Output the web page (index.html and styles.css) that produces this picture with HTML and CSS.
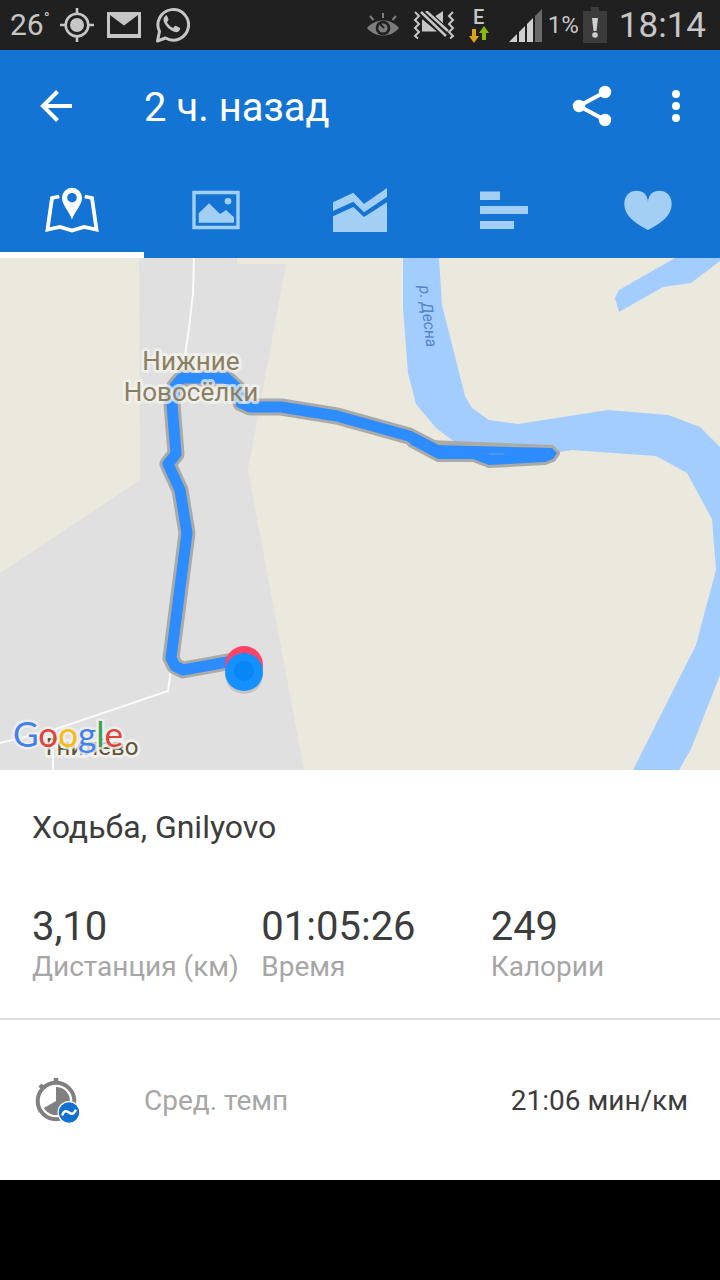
FILE: index.html
```
<!DOCTYPE html>
<html lang="ru">
<head>
  <meta charset="UTF-8">
  <meta name="viewport" content="width=device-width, initial-scale=1">
  <title>Ходьба, Gnilyovo</title>
  <link rel="stylesheet" href="styles.css">
</head>
<body>

  <div class="status-bar">
    <div class="status-left">
      <span class="temp">26<span class="degree">°</span></span>
      <svg class="status-icon" width="34" height="34" viewBox="0 0 34 34">
        <circle cx="17" cy="17" r="11.3" fill="none" stroke="#c6c6c6" stroke-width="2.6"/>
        <circle cx="17" cy="17" r="7" fill="#c6c6c6"/>
        <path d="M17 0v6M17 28v6M0 17h6M28 17h6" stroke="#c6c6c6" stroke-width="2.6"/>
      </svg>
      <svg class="status-icon" width="34" height="26" viewBox="0 0 34 26">
        <path d="M0 0h34v26H0z" fill="#c6c6c6"/>
        <path d="M3 3L17 13.500 31 3v19H3z" fill="#202020"/>
      </svg>
      <svg class="status-icon" width="36" height="36" viewBox="0 0 36 36">
        <path d="M3.500 34l2-9.500A15.300 15.300 0 1 1 11.500 31z" fill="none" stroke="#c6c6c6" stroke-width="3" stroke-linejoin="round"/>
        <path d="M11.500 9c-2 1-2.500 3.500-1.500 6 2 4.500 6 8.500 11 10 2.500.5 4.500-.5 5.200-3 .1-.7 0-1-.6-1.300l-3.700-1.900c-.6-.2-1 0-1.400.5l-1.300 1.600c-3-1.200-5-3.300-6.300-5.700l1.400-1.900c.3-.4.3-.7.1-1.200l-1.500-3.500c-.3-.6-.9-.6-1.900.4z" fill="#c6c6c6"/>
      </svg>
    </div>
    <div class="status-right">
      <svg class="icon-eye" width="32" height="26" viewBox="0 0 32 26">
        <path d="M0 16C8 6 24 6 32 16 24 26 8 26 0 16z" fill="#7d7d7d"/>
        <circle cx="16" cy="16" r="7.300" fill="#202020"/>
        <circle cx="16" cy="16" r="4.600" fill="#7d7d7d"/>
        <path d="M13 12l4 4" stroke="#202020" stroke-width="2"/>
        <path d="M16 1v5M3 4l3.500 4M29 4l-3.500 4" stroke="#7d7d7d" stroke-width="2"/>
      </svg>
      <svg class="icon-mute" width="42" height="28" viewBox="0 0 42 28">
        <path d="M2 1l4 4-4 4 4 4-4 4 4 4-4 4 3 2.500M40 1l-4 4 4 4-4 4 4 4-4 4 4 4-3 2.500" fill="none" stroke="#c6c6c6" stroke-width="2"/>
        <path d="M9 8l15 12.500H9zM21 6L30 0v14z" fill="#c6c6c6"/>
        <path d="M8 1l25 24M13 0l22 20" stroke="#202020" stroke-width="5"/>
        <path d="M8 1l25 24M13 0l22 20" stroke="#c6c6c6" stroke-width="2.500"/>
      </svg>
      <div class="data">
        <span>E</span>
        <svg width="20" height="17" viewBox="0 17 20 17">
          <path d="M3 20h4v7h3l-5 7-5-7h3z" fill="#d9a514"/>
          <path d="M13 31h4v-7h3l-5-7-5 7h3z" fill="#8ab80e"/>
        </svg>
      </div>
      <svg class="icon-signal" width="33" height="33" viewBox="0 0 33 33">
        <path d="M0 33l8-8v8zM10 23l6-6v16h-6zM18 15l6-6v24h-6z" fill="#d0d0d0"/>
        <path d="M26 7l7-7v33h-7z" fill="#6a6a6a"/>
      </svg>
      <span class="battery-level">1%</span>
      <svg class="icon-battery" width="24" height="36" viewBox="0 0 24 36">
        <path d="M0 4h8V0h8v4h8v32H0z" fill="#3c3c3c"/>
        <path d="M9 11h6l-1.500 13h-3z" fill="#d0d0d0"/>
        <circle cx="12" cy="28" r="2.800" fill="#d0d0d0"/>
      </svg>
      <span class="clock">18:14</span>
    </div>
  </div>

  <header class="app-bar">
    <button class="icon-button back" aria-label="Назад">
      <svg width="48" height="48" viewBox="0 0 48 48">
        <path d="M40 24H11M25.500 9.500L11 24l14.500 14.500" fill="none" stroke="#fff" stroke-width="4"/>
      </svg>
    </button>
    <h1>2 ч. назад</h1>
    <button class="icon-button share" aria-label="Поделиться">
      <svg width="48" height="48" viewBox="0 0 48 48">
        <path d="M37 10L11 24l26 14" fill="none" stroke="#fff" stroke-width="4"/>
        <circle cx="37" cy="10" r="6.200" fill="#fff"/>
        <circle cx="11" cy="24" r="6.200" fill="#fff"/>
        <circle cx="37" cy="38" r="6.200" fill="#fff"/>
      </svg>
    </button>
    <button class="icon-button more" aria-label="Ещё">
      <svg width="48" height="48" viewBox="0 0 48 48">
        <circle cx="24" cy="12" r="4" fill="#fff"/>
        <circle cx="24" cy="24" r="4" fill="#fff"/>
        <circle cx="24" cy="36" r="4" fill="#fff"/>
      </svg>
    </button>
  </header>

  <nav class="tabs">
    <a href="#map" class="tab active" aria-label="Карта">
      <svg width="64" height="64" viewBox="0 0 64 64">
        <path d="M19.300 18.500L12 20 7.500 51.500l12.500-2.500 12 3.500 12-3.500 12.500 2.500L52 20l-7.300-1.500" fill="none" stroke="currentColor" stroke-width="3.800"/>
        <path fill-rule="evenodd" d="M32 9.700a10 10 0 0 1 10 10C42 27 35 33 32 41.500 29 33 22 27 22 19.700a10 10 0 0 1 10-10zm0 5.200a4.800 4.800 0 1 0 0 9.600 4.800 4.800 0 0 0 0-9.600z" fill="currentColor"/>
      </svg>
    </a>
    <a href="#photos" class="tab" aria-label="Фото">
      <svg width="64" height="64" viewBox="0 0 64 64">
        <path d="M10 14.500h44v35H10z" fill="none" stroke="currentColor" stroke-width="3.400"/>
        <path d="M14.700 35.300L25 25.300 36 36l6-4 8 7.300v5.400H14.700z" fill="currentColor"/>
        <circle cx="44" cy="23.300" r="3.300" fill="currentColor"/>
      </svg>
    </a>
    <a href="#graphs" class="tab" aria-label="Графики">
      <svg width="64" height="64" viewBox="0 0 64 64">
        <path d="M5 24.300l20.300-9.600L36 26l23-16v8.700L36 34.300 25.300 23.700 5 33z" fill="currentColor"/>
        <path d="M5 38.300L25.300 29 36 39l23-14.700V54H5z" fill="currentColor"/>
      </svg>
    </a>
    <a href="#splits" class="tab" aria-label="Отрезки">
      <svg width="64" height="64" viewBox="0 0 64 64">
        <path d="M8 13.500h20V22H8zM8 28h48v8H8zM8 43h34v8H8z" fill="currentColor"/>
      </svg>
    </a>
    <a href="#heart" class="tab" aria-label="Пульс">
      <svg width="64" height="64" viewBox="0 0 64 64">
        <path d="M32 23.700C31.500 16.500 27 12.700 20.500 12.700 13 12.700 8.300 18.500 8.300 26 8.300 37 18 45 32 52 46 45 55.700 37 55.700 26 55.700 18.500 51 12.700 43.500 12.700 37 12.700 32.500 16.500 32 23.700z" fill="currentColor"/>
      </svg>
    </a>
  </nav>

  <div class="map" id="map">
    <svg class="map-canvas" viewBox="0 258 720 512">
      <rect y="258" width="720" height="512" fill="#ebe9dd"/>
      <path d="M139 258h98v6h49L248 470l56 300H0V573l140-93z" fill="#e0e0e0"/>

      <!-- river -->
      <path d="M403 258v50l5 65 8 31 20 24 20 15 104 9 12-2 84 6 31 17 25 46 4 51-20 75-63 125h46l12-21 29-74V447l-20-20-32-12-60-5-90 14-29-4-17-12-7-12-23-91-3-47z" fill="#a3ccff"/>
      <path d="M675 258h45v3l-29 22-28 4-44 25-4-14 4-8z" fill="#a3ccff"/>

      <!-- roads -->
      <path d="M194 258l-1 35-4 35-4 28" class="road"/>
      <path d="M172 662l-4 29-115 39v40M53 730L0 743" class="road"/>

      <!-- route -->
      <g class="route-shadow">
        <path d="M244 659l-61 11-8-4-4-8 16-125-7-43-12-26 8-10-4-50 3-18 7-8h44l12 11 3 14 9 4h31l56 9 72 20 29 15"/>
        <path d="M410 431l19 12 123 5 5 5-4 6-8 3-56 3-16-6h-35l-28-15z"/>
      </g>
      <path class="route" d="M244 659l-61 11-8-4-4-8 16-125-7-43-12-26 8-10-4-50 3-18 7-8h44l12 11 3 14 9 4h31l56 9 72 20 29 15"/>
      <path d="M410 431l24 14 118 3 5 5-4 6-8 3-56 3-16-6h-35l-28-15z" fill="#2d8cff"/>
      <path d="M489 454h15" stroke="#6f9fd0"/>

      <text x="191" y="370" class="place">Нижние</text>
      <text x="191" y="401" class="place">Новосёлки</text>
      <text x="419" y="286" class="river-name" transform="rotate(83 419 286)">р. Десна</text>

      <!-- start and finish markers -->
      <circle cx="244" cy="675" r="19" fill="#c4c4c4"/>
      <circle cx="244" cy="665" r="19" fill="#ff4467"/>
      <circle cx="244" cy="672" r="19" fill="#1590ff"/>
      <circle cx="244" cy="671" r="10" fill="#0786f5"/>

      <text x="92" y="755" class="village">Гнилёво</text>
      <text x="13" y="747" class="google"><tspan fill="#4280ef">G</tspan><tspan fill="#e04436">o</tspan><tspan fill="#f5bc0c">o</tspan><tspan fill="#4280ef">g</tspan><tspan fill="#34a350">l</tspan><tspan fill="#e04436">e</tspan></text>
    </svg>
  </div>

  <main>
    <section class="summary">
      <h2>Ходьба, Gnilyovo</h2>
      <dl class="stats">
        <div class="stat">
          <dt>Дистанция (км)</dt>
          <dd>3,10</dd>
        </div>
        <div class="stat">
          <dt>Время</dt>
          <dd>01:05:26</dd>
        </div>
        <div class="stat">
          <dt>Калории</dt>
          <dd>249</dd>
        </div>
      </dl>
    </section>

    <div class="detail-row">
      <svg width="48" height="48" viewBox="0 0 48 48">
        <path d="M24 5V1M10.500 10.500L8 8" stroke="#808080" stroke-width="4.500"/>
        <circle cx="24" cy="24" r="18.300" fill="none" stroke="#808080" stroke-width="4"/>
        <path d="M24 24V10a14 14 0 1 1-12.100 21z" fill="#808080"/>
        <circle cx="37" cy="35.500" r="11.500" fill="#fff"/>
        <circle cx="37" cy="35.500" r="10.200" fill="#1370cf"/>
        <path d="M30.500 37.500c1.500-4 4-4 6.500-2s4.500 2 6.500-2" fill="none" stroke="#fff" stroke-width="2.500" stroke-linecap="round"/>
      </svg>
      <span class="detail-label">Сред. темп</span>
      <span class="detail-value">21:06 мин/км</span>
    </div>
  </main>

</body>
</html>
```
FILE: styles.css
```
* {
  box-sizing: border-box;
}

body {
  font-family: Roboto, "Liberation Sans", sans-serif;
  margin: 0;
  background: #000;
  color: #3c3c3c;
}

svg {
  display: block;
  flex-shrink: 0;
}

/* Status bar */
.status-bar {
  display: flex;
  justify-content: space-between;
  align-items: center;
  height: 50px;
  padding: 0 14px 0 10px;
  background: #202020;
  color: #c6c6c6;
}

.status-left,
.status-right {
  display: flex;
  align-items: center;
}

.status-left {
  gap: 13px;
}

.temp {
  display: flex;
  font-size: 30px;
  line-height: 36px;
}

.degree {
  font-size: 16px;
  line-height: 24px;
  margin-right: -3px;
}

.status-right {
  gap: 6px;
}

.icon-mute {
  margin: 0 8px;
}

.data {
  display: flex;
  flex-direction: column;
  align-items: center;
}

.data span {
  font-size: 20px;
  font-weight: 500;
  line-height: 18px;
}

.icon-signal {
  margin-left: 14px;
}

.battery-level {
  font-size: 24px;
  margin-right: -2px;
}

.clock {
  font-size: 35px;
  margin-left: 6px;
}

/* App bar */
.app-bar {
  display: flex;
  align-items: center;
  height: 112px;
  background: #1374d3;
  color: #fff;
}

.app-bar h1 {
  flex-grow: 1;
  margin: 0 0 0 32px;
  padding-top: 4px;
  font-size: 40px;
  font-weight: 400;
  line-height: 48px;
}

.icon-button {
  display: flex;
  justify-content: center;
  align-items: center;
  height: 96px;
  padding: 0;
  border: none;
  background: none;
  cursor: pointer;
}

.back {
  width: 112px;
}

.share {
  width: 80px;
}

.more {
  width: 88px;
}

/* Tabs */
.tabs {
  display: flex;
  background: #1374d3;
}

.tab {
  display: flex;
  flex: 1;
  justify-content: center;
  padding: 16px 0 10px;
  border-bottom: 6px solid transparent;
  color: #a3cff5;
}

.tab.active {
  color: #fff;
  border-bottom-color: #fff;
}

/* Map */
.map-canvas {
  width: 100%;
  height: auto;
}

.road {
  fill: none;
  stroke: #fafafa;
  stroke-width: 2;
}

.route {
  fill: none;
  stroke: #2d8cff;
  stroke-width: 11;
  stroke-linejoin: round;
}

.route-shadow {
  fill: none;
  stroke: #aaaaa6;
  stroke-width: 17;
  stroke-linejoin: round;
}

.route-shadow path + path {
  stroke-width: 6;
}

.place,
.village {
  text-anchor: middle;
  paint-order: stroke;
  stroke: rgba(245, 245, 240, 0.7);
  stroke-width: 6px;
  stroke-linejoin: round;
}

.place {
  font-size: 26px;
  fill: #8b7f62;
}

.village {
  font-size: 24px;
  fill: #5f5436;
}

.river-name {
  font-size: 16px;
  font-style: italic;
  fill: #5585c8;
}

.google {
  font-family: Lato, sans-serif;
  font-size: 35px;
  paint-order: stroke;
  stroke: rgba(240, 240, 240, 0.8);
  stroke-width: 5px;
  stroke-linejoin: round;
}

/* Workout summary */
main {
  background: #fff;
}

.summary {
  padding: 37px 0 35px 32px;
  border-bottom: 2px solid #dedede;
}

.summary h2 {
  margin: 0 0 56px;
  font-size: 32px;
  font-weight: 400;
  line-height: 40px;
}

.stats {
  display: grid;
  grid-template-columns: repeat(3, 1fr);
  margin: 0;
}

.stat {
  display: flex;
  flex-direction: column-reverse;
}

.stat dt {
  font-size: 28px;
  line-height: 32px;
  color: #a6a6a6;
  white-space: nowrap;
}

.stat dd {
  margin: 0;
  font-size: 40px;
  line-height: 48px;
}

.detail-row {
  display: flex;
  align-items: center;
  min-height: 160px;
  padding: 2px 32px 0;
  font-size: 28px;
  line-height: 32px;
}

.detail-label {
  flex-grow: 1;
  margin-left: 64px;
  color: #a6a6a6;
}
```
